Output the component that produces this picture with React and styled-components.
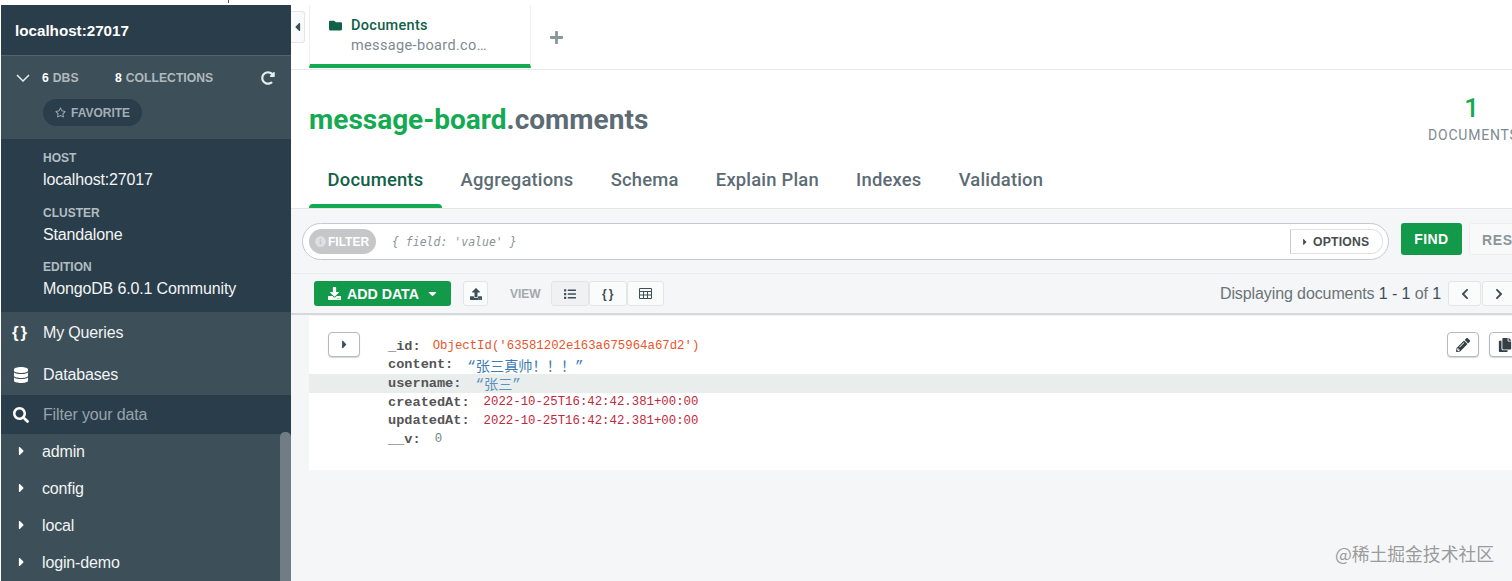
import React from "react";
import styled, { createGlobalStyle } from "styled-components";
import {
  FaCaretDown,
  FaCaretLeft,
  FaCaretRight,
  FaChevronLeft,
  FaChevronRight,
  FaCopy,
  FaDatabase,
  FaDownload,
  FaFolder,
  FaInfoCircle,
  FaList,
  FaPencilAlt,
  FaPlus,
  FaRedoAlt,
  FaRegStar,
  FaSearch,
  FaUpload,
} from "react-icons/fa";

const GlobalStyle = createGlobalStyle`
  html, body {
    margin: 0;
    padding: 0;
    background: #fff;
  }
  * {
    box-sizing: border-box;
  }
`;

const Page = styled.div`
  position: relative;
  width: 1512px;
  height: 581px;
  overflow: hidden;
  display: flex;
  flex-direction: column;
  background: #fff;
  font-family: "Liberation Sans", Arial, sans-serif;
`;

const TopStrip = styled.div`
  height: 5px;
  flex: none;
  padding-left: 228px;
  background: #fff;
`;

const TickMark = styled.div`
  width: 1px;
  height: 3px;
  background: #555;
`;

const Body = styled.div`
  flex: 1;
  display: flex;
  min-height: 0;
`;

/* Sidebar */
const Sidebar = styled.aside`
  width: 291px;
  flex: none;
  display: flex;
  flex-direction: column;
  background: #3d4f58;
  border-left: 1px solid #fff;
  color: #fff;
`;

const SideHeader = styled.div`
  height: 51px;
  flex: none;
  display: flex;
  align-items: center;
  padding: 1px 14px 0;
  background: #2a3d4a;
  border-bottom: 1px solid #55646d;
  font-size: 15.2px;
  font-weight: 700;
`;

const Stats = styled.div`
  height: 83px;
  flex: none;
  padding: 14px 16px 0 15px;
  background: #3d4f58;
`;

const StatsRow = styled.div`
  display: flex;
  align-items: center;
  height: 16px;
  font-size: 12.2px;
  font-weight: 700;
  color: #b0b9be;
  svg.chev {
    width: 14px;
    margin-right: 12px;
  }
`;

const Stat = styled.span`
  width: ${(p) => p.$w}px;
  b {
    color: #fff;
    margin-right: 4px;
  }
`;

const Favorite = styled.div`
  width: 99px;
  height: 27px;
  margin: 13px 0 0 27px;
  display: flex;
  align-items: center;
  gap: 5px;
  padding-left: 12px;
  border-radius: 14px;
  background: #2a3d4a;
  color: #a3aeb4;
  font-size: 12px;
  font-weight: 700;
`;

const Refresh = styled(FaRedoAlt)`
  margin-left: auto;
  color: #e8ecee;
  font-size: 14px;
`;

const Info = styled.div`
  height: 173px;
  flex: none;
  padding: 12px 0 0 42px;
  background: #2a3d4a;
`;

const InfoBlock = styled.div`
  height: 54.5px;
`;

const InfoLabel = styled.div`
  font-size: 12px;
  font-weight: 700;
  line-height: 15px;
  color: #b4bdc2;
`;

const InfoValue = styled.div`
  margin-top: 4px;
  font-size: 16px;
  line-height: 19px;
  letter-spacing: -0.15px;
  color: #f2f4f5;
`;

const NavItem = styled.div`
  height: 41.5px;
  flex: none;
  display: flex;
  align-items: center;
  padding-top: 1px;
  font-size: 16px;
  letter-spacing: -0.15px;
  color: #f2f4f5;
`;

const NavIcon = styled.span`
  width: 42px;
  flex: none;
  display: flex;
  justify-content: center;
  padding-right: 3px;
  font-size: 16px;
  font-weight: 700;
  color: #fff;
`;

const QueriesIcon = styled(NavIcon)`
  font-size: 17px;
  letter-spacing: 2px;
`;

const FilterData = styled(NavItem)`
  height: 39px;
  background: #2a3d4a;
  color: #98a4aa;
`;

const DbList = styled.div`
  position: relative;
  flex: 1;
  min-height: 0;
`;

const DbRow = styled.div`
  height: 37px;
  display: flex;
  align-items: flex-start;
  line-height: 35px;
  font-size: 16px;
  letter-spacing: -0.15px;
  color: #f2f4f5;
  svg {
    width: 41px;
    height: 34px;
    flex: none;
    padding: 10px 0;
    color: #fff;
  }
`;

const ScrollThumb = styled.div`
  position: absolute;
  top: -2px;
  right: 0;
  bottom: 0;
  width: 11px;
  border-radius: 5px 5px 0 0;
  background: #707d85;
`;

/* Main */
const Main = styled.main`
  flex: 1;
  min-width: 0;
  display: flex;
  flex-direction: column;
  background: #f5f6f7;
`;

const TabBar = styled.div`
  height: 65px;
  flex: none;
  display: flex;
  align-items: flex-start;
  background: #fff;
  border-bottom: 1px solid #e8eaeb;
`;

const Toggle = styled.div`
  width: 14px;
  height: 32px;
  margin: 6px 4px 0 0;
  display: flex;
  align-items: center;
  justify-content: center;
  background: #f9fafa;
  border: 1px solid #e3e5e6;
  border-left: 0;
  border-radius: 0 3px 3px 0;
  color: #3d4f58;
  font-size: 14px;
`;

const Tab = styled.div`
  width: 222px;
  height: 63px;
  flex: none;
  padding: 12px 0 0 19px;
  background: #fff;
  border-left: 1px solid #eef0f0;
  border-right: 1px solid #eef0f0;
  border-bottom: 4px solid #13aa52;
`;

const TabTitle = styled.div`
  display: flex;
  align-items: center;
  gap: 9px;
  font-family: "Roboto", sans-serif;
  font-size: 14.5px;
  font-weight: 500;
  line-height: 17px;
  letter-spacing: 0.3px;
  color: #116149;
  svg {
    font-size: 13px;
  }
`;

const TabSub = styled.div`
  margin: 3px 0 0 22px;
  font-family: "Roboto", sans-serif;
  font-size: 14.5px;
  line-height: 17px;
  letter-spacing: 0.35px;
  color: #7e8a90;
`;

const AddTab = styled.div`
  margin: 25px 0 0 18px;
  display: flex;
  color: #89979b;
  font-size: 15px;
`;

const Header = styled.div`
  height: 139px;
  flex: none;
  display: flex;
  flex-direction: column;
  padding: 0 0 0 18px;
  background: #fff;
  border-bottom: 1px solid #e4e6e7;
`;

const TitleRow = styled.div`
  height: 94px;
  flex: none;
  display: flex;
  justify-content: space-between;
`;

const Title = styled.h1`
  margin: 33px 0 0;
  font-family: "Roboto", sans-serif;
  font-size: 28px;
  line-height: 34px;
  font-weight: 700;
  color: #5d6c74;
  span {
    color: #13aa52;
  }
`;

const Count = styled.div`
  width: 84px;
  flex: none;
  padding-top: 23px;
  white-space: nowrap;
  overflow: hidden;
  font-family: "Roboto", sans-serif;
  color: #7e8a90;
  font-size: 14px;
  letter-spacing: 0.8px;
  b {
    display: block;
    width: 88px;
    margin-bottom: 4px;
    text-align: center;
    color: #13aa52;
    font-size: 26px;
    line-height: 30px;
    font-weight: 500;
  }
`;

const ViewTabs = styled.div`
  display: flex;
`;

const ViewTab = styled.div`
  position: relative;
  height: 44px;
  padding: 5px 18.6px 0;
  font-family: "Roboto", sans-serif;
  font-size: 18.4px;
  font-weight: 500;
  line-height: 22px;
  letter-spacing: 0.2px;
  color: ${(p) => (p.$active ? "#116149" : "#5d6c74")};
  &::after {
    content: "";
    display: ${(p) => (p.$active ? "block" : "none")};
    position: absolute;
    left: 0;
    right: 0;
    bottom: 0;
    height: 4px;
    border-radius: 4px 4px 0 0;
    background: #13aa52;
  }
`;

const QueryBar = styled.div`
  height: 65px;
  flex: none;
  display: flex;
  align-items: flex-start;
  padding: 14px 0 0 11px;
  border-bottom: 1px solid #e9ebec;
`;

const QueryInput = styled.div`
  width: 1087px;
  height: 37px;
  flex: none;
  display: flex;
  align-items: center;
  padding: 0 5px 0 6px;
  background: #fff;
  border: 1px solid #c6cacc;
  border-radius: 19px;
`;

const FilterPill = styled.div`
  width: 67px;
  height: 25px;
  flex: none;
  display: flex;
  align-items: center;
  gap: 2px;
  padding-left: 6px;
  border-radius: 13px;
  background: #c5c7c8;
  color: #fff;
  font-size: 12px;
  font-weight: 700;
`;

const FilterText = styled.div`
  margin-left: 16px;
  flex: 1;
  font-family: "DejaVu Sans Mono", monospace;
  font-style: italic;
  font-size: 11.5px;
  color: #8b9396;
`;

const OptionsButton = styled.div`
  width: 93px;
  height: 25px;
  flex: none;
  display: flex;
  align-items: center;
  gap: 3px;
  padding-left: 9px;
  background: #fff;
  border-radius: 0 12px 12px 0;
  border: 1px solid #dfe1e2;
  border-left-color: #c9cccd;
  color: #464c4f;
  font-size: 12.2px;
  font-weight: 700;
  letter-spacing: 0.2px;
`;

const FindButton = styled.div`
  width: 61px;
  height: 32px;
  flex: none;
  margin-left: 12px;
  display: flex;
  align-items: center;
  justify-content: center;
  border-radius: 3px;
  background: #13994a;
  color: #fff;
  font-size: 14px;
  font-weight: 700;
  letter-spacing: 0.4px;
`;

const ResetButton = styled.div`
  width: 70px;
  height: 32px;
  flex: none;
  margin-left: 7px;
  padding: 8px 0 0 12px;
  border: 1px solid #eceeee;
  border-radius: 3px;
  background: #f8f9f9;
  color: #8d9498;
  font-size: 14px;
  font-weight: 700;
  letter-spacing: 0.6px;
`;

const Toolbar = styled.div`
  height: 41px;
  flex: none;
  display: flex;
  align-items: center;
  padding: 0 0 0 23px;
  border-bottom: 2px solid #d5d8d9;
`;

const AddData = styled.div`
  width: 137px;
  height: 25px;
  flex: none;
  display: flex;
  align-items: center;
  gap: 6px;
  padding-left: 14px;
  border-radius: 3px;
  background: #13994a;
  color: #fff;
  font-size: 14.2px;
  font-weight: 700;
  white-space: nowrap;
  svg:last-child {
    margin-left: 1px;
  }
`;

const IconButton = styled.div`
  width: ${(p) => p.$w || 25}px;
  height: 25px;
  flex: none;
  display: flex;
  align-items: center;
  justify-content: center;
  background: ${(p) => (p.$active ? "#f0f1f2" : "#fafbfb")};
  border: 1px solid #e3e5e6;
  border-radius: 3px;
  font-size: 12px;
  font-weight: 700;
  color: #3d4f58;
`;

const UploadButton = styled(IconButton)`
  margin-left: 12px;
`;

const ViewLabel = styled.span`
  margin: 0 10px 0 22px;
  font-size: 12px;
  font-weight: 700;
  color: #a3a9ac;
`;

const ViewGroup = styled.div`
  display: flex;
`;

const BraceGlyph = styled.span`
  font-weight: 700;
  letter-spacing: 2px;
  padding-left: 2px;
`;

const Displaying = styled.div`
  margin-left: auto;
  display: flex;
  align-items: center;
  gap: 7px;
  font-size: 16px;
  letter-spacing: -0.1px;
  color: #6a7478;
  b {
    font-weight: 400;
    color: #3d4f58;
  }
`;

const Pager = styled.div`
  display: flex;
  gap: 1px;
  margin-right: -3px;
  color: #5d6c74;
`;

const DocList = styled.div`
  padding: 1px 0 0 18px;
  flex: none;
`;

const DocCard = styled.div`
  position: relative;
  height: 154px;
  background: #fff;
  padding-top: 21px;
`;

const ExpandButton = styled(IconButton)`
  position: absolute;
  top: 16px;
  left: 19px;
  width: 32px;
  font-size: 13px;
  background: #fff;
  border-color: #b6babc;
  border-radius: 4px;
  box-shadow: 0 1px 1px #d5d8d9;
`;

const DocActions = styled.div`
  position: absolute;
  top: 16px;
  right: -9px;
  display: flex;
  gap: 10px;
`;

const ActionButton = styled(ExpandButton)`
  position: static;
  font-size: 14px;
  color: #333f45;
`;

const Field = styled.div`
  height: 18.6px;
  display: flex;
  align-items: center;
  padding-left: 79px;
  background: ${(p) => (p.$hover ? "#e9edec" : "transparent")};
  font-family: "Liberation Mono", monospace;
  white-space: nowrap;
`;

const Key = styled.span`
  margin-right: ${(p) => p.$gap || 14}px;
  font-size: 13.6px;
  font-weight: 700;
  color: #555;
`;

const Val = styled.span`
  font-size: ${(p) => (p.$cjk ? "14.2px" : "12.35px")};
  font-family: "Liberation Mono", "Noto Sans CJK SC", monospace;
  color: ${(p) => p.$color};
`;

const Watermark = styled.div`
  position: absolute;
  right: 18px;
  bottom: 18px;
  font-family: "Noto Sans CJK SC", sans-serif;
  font-size: 17.8px;
  line-height: 20px;
  color: rgba(130, 130, 130, 0.8);
`;

const fields = [
  { key: "_id", value: "ObjectId('63581202e163a675964a67d2')", color: "#e8552b", gap: 12 },
  { key: "content", value: "“张三真帅！！！”", color: "#3c7cb5", cjk: true },
  { key: "username", value: "“张三”", color: "#5a93c0", cjk: true, hover: true },
  { key: "createdAt", value: "2022-10-25T16:42:42.381+00:00", color: "#c0283c" },
  { key: "updatedAt", value: "2022-10-25T16:42:42.381+00:00", color: "#c0283c" },
  { key: "__v", value: "0", color: "#6e8a80" },
];

const databases = ["admin", "config", "local", "login-demo"];
const tabs = ["Documents", "Aggregations", "Schema", "Explain Plan", "Indexes", "Validation"];

const App = () => {
  return (
    <Page>
      <GlobalStyle />
      <TopStrip><TickMark /></TopStrip>
      <Body>
        <Sidebar>
          <SideHeader>localhost:27017</SideHeader>
          <Stats>
            <StatsRow>
              <svg className="chev" viewBox="0 0 14 8" height="8" fill="none" stroke="#e8ecee" strokeWidth="1.5">
                <path d="M1 1l6 6 6-6" />
              </svg>
              <Stat $w={73}><b>6</b>DBS</Stat>
              <Stat $w={98}><b>8</b>COLLECTIONS</Stat>
              <Refresh />
            </StatsRow>
            <Favorite><FaRegStar size={11} />FAVORITE</Favorite>
          </Stats>
          <Info>
            <InfoBlock>
              <InfoLabel>HOST</InfoLabel>
              <InfoValue>localhost:27017</InfoValue>
            </InfoBlock>
            <InfoBlock>
              <InfoLabel>CLUSTER</InfoLabel>
              <InfoValue>Standalone</InfoValue>
            </InfoBlock>
            <InfoBlock>
              <InfoLabel>EDITION</InfoLabel>
              <InfoValue>MongoDB 6.0.1 Community</InfoValue>
            </InfoBlock>
          </Info>
          <NavItem><QueriesIcon>{"{}"}</QueriesIcon>My Queries</NavItem>
          <NavItem><NavIcon><FaDatabase /></NavIcon>Databases</NavItem>
          <FilterData><NavIcon><FaSearch /></NavIcon>Filter your data</FilterData>
          <DbList>
            {databases.map((name) => (
              <DbRow key={name}><FaCaretRight />{name}</DbRow>
            ))}
            <ScrollThumb />
          </DbList>
        </Sidebar>
        <Main>
          <TabBar>
            <Toggle><FaCaretLeft /></Toggle>
            <Tab>
              <TabTitle><FaFolder />Documents</TabTitle>
              <TabSub>message-board.co…</TabSub>
            </Tab>
            <AddTab><FaPlus /></AddTab>
          </TabBar>
          <Header>
            <TitleRow>
              <Title><span>message-board</span>.comments</Title>
              <Count><b>1</b>DOCUMENTS</Count>
            </TitleRow>
            <ViewTabs>
              {tabs.map((name, i) => (
                <ViewTab key={name} $active={i === 0}>{name}</ViewTab>
              ))}
            </ViewTabs>
          </Header>
          <QueryBar>
            <QueryInput>
              <FilterPill><FaInfoCircle size={11} color="#dfe0e1" />FILTER</FilterPill>
              <FilterText>{"{ field: 'value' }"}</FilterText>
              <OptionsButton><FaCaretRight size={10} />OPTIONS</OptionsButton>
            </QueryInput>
            <FindButton>FIND</FindButton>
            <ResetButton>RESET</ResetButton>
          </QueryBar>
          <Toolbar>
            <AddData><FaDownload size={13} />ADD DATA<FaCaretDown size={13} /></AddData>
            <UploadButton><FaUpload /></UploadButton>
            <ViewLabel>VIEW</ViewLabel>
            <ViewGroup>
              <IconButton $w={38} $active><FaList /></IconButton>
              <IconButton $w={38}><BraceGlyph>{"{}"}</BraceGlyph></IconButton>
              <IconButton $w={37}>
                <svg width="13" height="11" viewBox="0 0 13 11" fill="none" stroke="#3d4f58" strokeWidth="1">
                  <path d="M.5.5h12v10H.5zM.5 3.5h12M.5 7h12M4.5 3.5v7M8.5 3.5v7" />
                </svg>
              </IconButton>
            </ViewGroup>
            <Displaying>
              <span>Displaying documents <b>1 - 1</b> of <b>1</b></span>
              <Pager>
                <IconButton $w={33}><FaChevronLeft /></IconButton>
                <IconButton $w={33}><FaChevronRight /></IconButton>
              </Pager>
            </Displaying>
          </Toolbar>
          <DocList>
            <DocCard>
              <ExpandButton><FaCaretRight /></ExpandButton>
              <DocActions>
                <ActionButton><FaPencilAlt /></ActionButton>
                <ActionButton><FaCopy /></ActionButton>
              </DocActions>
              {fields.map((f) => (
                <Field key={f.key} $hover={f.hover}>
                  <Key $gap={f.gap}>{f.key}:</Key>
                  <Val $color={f.color} $cjk={f.cjk}>{f.value}</Val>
                </Field>
              ))}
            </DocCard>
          </DocList>
        </Main>
      </Body>
      <Watermark>@稀土掘金技术社区</Watermark>
    </Page>
  );
};

export default App;
